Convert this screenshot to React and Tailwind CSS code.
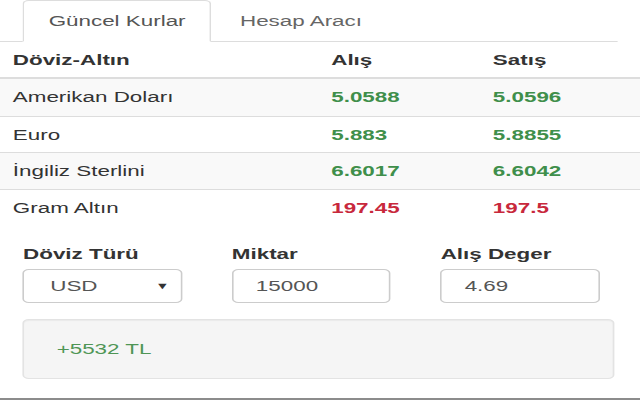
import React from "react";

const rows = [
  { name: "Amerikan Doları", buy: "5.0588", sell: "5.0596", up: true },
  { name: "Euro", buy: "5.883", sell: "5.8855", up: true },
  { name: "İngiliz Sterlini", buy: "6.6017", sell: "6.6042", up: true },
  { name: "Gram Altın", buy: "197.45", sell: "197.5", up: false },
];

export default function App() {
  return (
    <div className="w-[640px] h-[400px] overflow-hidden bg-white">
      <div className="w-[400px] h-[400px] origin-top-left scale-x-[1.6] font-['Liberation_Sans',Arial,sans-serif] text-[14px] leading-5 text-[#333] flex flex-col border-b-2 border-[#8c8c8c]">
        {/* Tabs */}
        <div className="pl-[14.4px] w-[386px] flex border-b border-[#ddd]">
          <div className="-mb-px px-[15px] pt-[10px] pb-[10px] border border-[#ddd] border-b-white rounded-t bg-white text-[#555]">
            Güncel Kurlar
          </div>
          <div className="-mb-px ml-[2px] px-[15px] py-[10px] border border-transparent text-[#666]">
            Hesap Aracı
          </div>
        </div>

        {/* Table */}
        <div className="flex flex-col">
          <div className="flex font-bold border-b-2 border-[#ddd] h-[37px] items-center">
            <div className="w-[199px] px-2">Döviz-Altın</div>
            <div className="w-[101px] px-2">Alış</div>
            <div className="flex-1 px-2">Satış</div>
          </div>
          {rows.map((r, i) => (
            <div
              key={r.name}
              className={`flex items-center h-[36.7px] ${i > 0 ? "border-t border-[#ddd]" : ""} ${i % 2 === 0 ? "bg-[#f9f9f9]" : "bg-white"}`}
            >
              <div className="w-[199px] px-2">{r.name}</div>
              <div className={`w-[101px] px-2 font-bold ${r.up ? "text-[#3f8f4b]" : "text-[#c8283c]"}`}>{r.buy}</div>
              <div className={`flex-1 px-2 font-bold ${r.up ? "text-[#3f8f4b]" : "text-[#c8283c]"}`}>{r.sell}</div>
            </div>
          ))}
        </div>

        {/* Form */}
        <div className="mt-[18px] pl-[14.4px] pr-[15.6px] flex flex-col">
          <div className="flex gap-[31px]">
            <div className="w-[99.5px] flex flex-col">
              <div className="font-bold mb-[5px]">Döviz Türü</div>
              <div className="h-[34px] border border-[#ccc] rounded flex items-center pl-[16px] pr-[7px] text-[#555] bg-white">
                <span className="flex-1">USD</span>
                <span className="text-[9px] text-[#333]">▼</span>
              </div>
            </div>
            <div className="w-[99.5px] flex flex-col">
              <div className="font-bold mb-[5px]">Miktar</div>
              <div className="h-[34px] border border-[#ccc] rounded flex items-center pl-[14px] text-[#555] bg-white">
                15000
              </div>
            </div>
            <div className="w-[99.5px] flex flex-col">
              <div className="font-bold mb-[5px]">Alış Deger</div>
              <div className="h-[34px] border border-[#ccc] rounded flex items-center pl-[14px] text-[#555] bg-white">
                4.69
              </div>
            </div>
          </div>

          <div className="mt-[16px] h-[60px] border border-[#e3e3e3] rounded bg-[#f5f5f5] shadow-[inset_0_1px_1px_rgba(0,0,0,0.05)] flex items-center pl-[20px] text-[#4f9655]">
            +5532 TL
          </div>
        </div>
      </div>
    </div>
  );
}
